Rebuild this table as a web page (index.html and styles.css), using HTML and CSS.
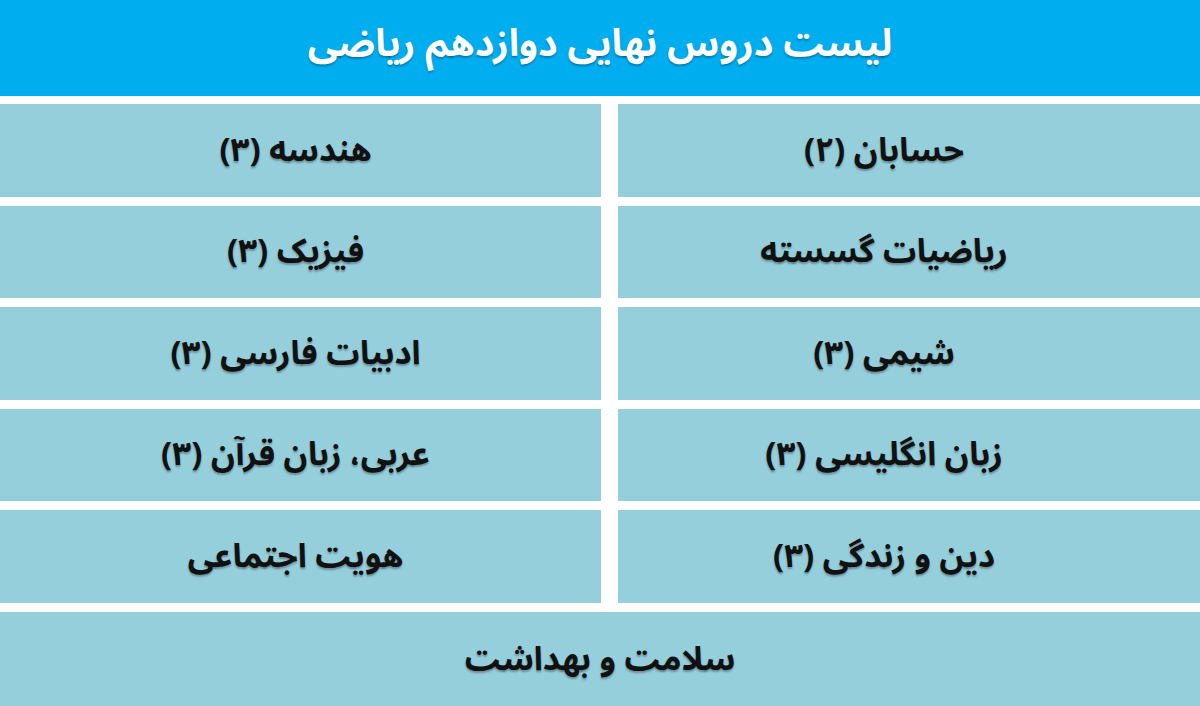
FILE: index.html
```html
<!DOCTYPE html>
<html lang="fa" dir="rtl">
<head>
<meta charset="utf-8">
<title>لیست دروس نهایی دوازدهم ریاضی</title>
<link rel="stylesheet" href="styles.css">
</head>
<body>
<div class="page">
  <header class="title-bar">
    <h1 class="title">لیست دروس نهایی دوازدهم ریاضی</h1>
  </header>
  <div class="table">
    <div class="cell right">حسابان (۲)</div>
    <div class="cell left">هندسه (۳)</div>
    <div class="cell right">ریاضیات گسسته</div>
    <div class="cell left">فیزیک (۳)</div>
    <div class="cell right">شیمی (۳)</div>
    <div class="cell left">ادبیات فارسی (۳)</div>
    <div class="cell right">زبان انگلیسی (۳)</div>
    <div class="cell left">عربی، زبان قرآن (۳)</div>
    <div class="cell right">دین و زندگی (۳)</div>
    <div class="cell left">هویت اجتماعی</div>
    <div class="cell full">سلامت و بهداشت</div>
  </div>
</div>
</body>
</html>
```

FILE: styles.css
```css
html, body {
  margin: 0;
  padding: 0;
  background: #ffffff;
}

.page {
  width: 1200px;
  height: 706px;
  overflow: hidden;
  font-family: "Noto Sans Arabic", "Vazirmatn", "DejaVu Sans", "Noto Sans", sans-serif;
  font-weight: bold;
}

.title-bar {
  height: 96px;
  box-sizing: border-box;
  padding-bottom: 8px;
  background: #00aeef;
  display: flex;
  align-items: center;
  justify-content: center;
}

.title {
  margin: 0;
  color: #ffffff;
  font-size: 38px;
  font-weight: bold;
  text-shadow: 0 2px 2px rgba(0, 40, 80, 0.35);
}

.table {
  padding-top: 8px;
  display: grid;
  grid-template-columns: 582px 601px;
  grid-template-rows: repeat(5, 92.5px) 94.5px;
  column-gap: 17px;
  row-gap: 9px;
}

.cell {
  background: #96cfdc;
  display: flex;
  align-items: center;
  justify-content: center;
  color: #111111;
  font-size: 33px;
  text-shadow: 0 2px 2px rgba(0, 0, 0, 0.3);
}

.cell.right {
  padding-right: 50px;
}

.cell.left {
  padding-right: 10px;
}

.cell.full {
  grid-column: 1 / -1;
  padding-top: 2px;
}
```
